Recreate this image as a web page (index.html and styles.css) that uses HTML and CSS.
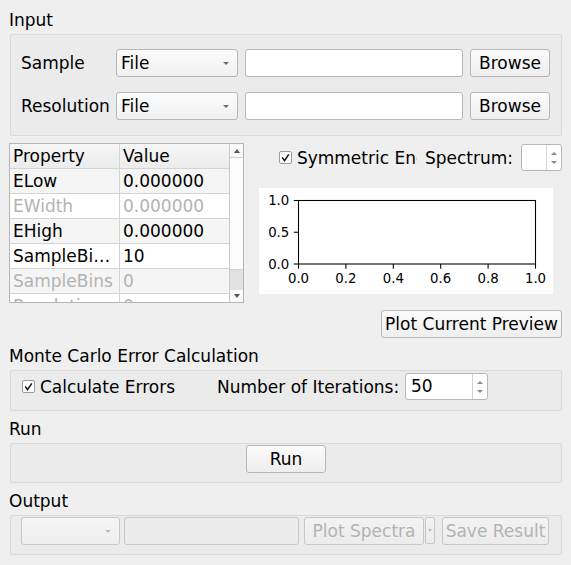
FILE: index.html
```html
<!DOCTYPE html>
<html>
<head>
<meta charset="utf-8">
<link rel="stylesheet" href="styles.css">
</head>
<body>
<div class="page">
  <div class="title">Input</div>
  <div class="group input-group">
    <div class="frow">
      <span class="flabel">Sample</span>
      <div class="combo"><span class="ctext">File</span><i class="tri-down"></i></div>
      <div class="field"></div>
      <div class="btn browse">Browse</div>
    </div>
    <div class="frow">
      <span class="flabel">Resolution</span>
      <div class="combo"><span class="ctext">File</span><i class="tri-down"></i></div>
      <div class="field"></div>
      <div class="btn browse">Browse</div>
    </div>
  </div>

  <div class="middle">
    <div class="table">
      <div class="cells">
        <div class="trow head"><div class="cell c1">Property</div><div class="cell c2">Value</div></div>
        <div class="trow alt"><div class="cell c1">ELow</div><div class="cell c2">0.000000</div></div>
        <div class="trow dis"><div class="cell c1">EWidth</div><div class="cell c2">0.000000</div></div>
        <div class="trow alt"><div class="cell c1">EHigh</div><div class="cell c2">0.000000</div></div>
        <div class="trow"><div class="cell c1">SampleBi…</div><div class="cell c2">10</div></div>
        <div class="trow alt dis"><div class="cell c1">SampleBins</div><div class="cell c2">0</div></div>
        <div class="trow dis"><div class="cell c1">Resolutio</div><div class="cell c2">0</div></div>
      </div>
      <div class="vscroll">
        <div class="sbtn up"><i class="stri-up"></i></div>
        <div class="handle"></div>
        <div class="groove"></div>
        <div class="sbtn down"><i class="stri-down"></i></div>
      </div>
    </div>

    <div class="rightcol">
      <div class="specrow">
        <div class="check sym">
          <svg class="cbox" width="13" height="13" viewBox="0 0 13 13"><rect x="0.5" y="0.5" width="12" height="12" rx="1.5" fill="#fff" stroke="#9c9c9c"/><path d="M3.2 6.4 L5.5 9.6 L9.8 3.3" fill="none" stroke="#111" stroke-width="1.5"/></svg>
          <span class="clip">Symmetric Energy Range</span>
        </div>
        <span class="speclabel">Spectrum:</span>
        <div class="spin spin-small">
          <div class="spinval"></div>
          <div class="spinarrows"><i class="tri-up"></i><i class="tri-down2"></i></div>
        </div>
      </div>
      <div class="plot">
        <svg width="294" height="106" viewBox="0 0 294 106">
          <rect x="0" y="0" width="294" height="106" fill="#fff"/>
          <rect x="39.5" y="12.5" width="237" height="63.5" fill="#fff" stroke="#000" stroke-width="1.07"/>
          <g stroke="#000" stroke-width="1.07">
            <line x1="39.5" y1="76" x2="39.5" y2="80.7"/>
            <line x1="86.9" y1="76" x2="86.9" y2="80.7"/>
            <line x1="134.3" y1="76" x2="134.3" y2="80.7"/>
            <line x1="181.7" y1="76" x2="181.7" y2="80.7"/>
            <line x1="229.1" y1="76" x2="229.1" y2="80.7"/>
            <line x1="276.5" y1="76" x2="276.5" y2="80.7"/>
            <line x1="34.8" y1="12.5" x2="39.5" y2="12.5"/>
            <line x1="34.8" y1="44.25" x2="39.5" y2="44.25"/>
            <line x1="34.8" y1="76" x2="39.5" y2="76"/>
          </g>
          <g class="ticklbl" text-anchor="middle">
            <text x="39.5" y="95">0.0</text>
            <text x="86.9" y="95">0.2</text>
            <text x="134.3" y="95">0.4</text>
            <text x="181.7" y="95">0.6</text>
            <text x="229.1" y="95">0.8</text>
            <text x="276.5" y="95">1.0</text>
          </g>
          <g class="ticklbl" text-anchor="end">
            <text x="30.3" y="17.4">1.0</text>
            <text x="30.3" y="49.1">0.5</text>
            <text x="30.3" y="80.9">0.0</text>
          </g>
        </svg>
      </div>
      <div class="btnrow">
        <div class="btn preview">Plot Current Preview</div>
      </div>
    </div>
  </div>

  <div class="title sec">Monte Carlo Error Calculation</div>
  <div class="group mc-group">
    <div class="check calc">
      <svg class="cbox" width="13" height="13" viewBox="0 0 13 13"><rect x="0.5" y="0.5" width="12" height="12" rx="1.5" fill="#fff" stroke="#9c9c9c"/><path d="M3.2 6.4 L5.5 9.6 L9.8 3.3" fill="none" stroke="#111" stroke-width="1.5"/></svg>
      <span>Calculate Errors</span>
    </div>
    <span class="iterlabel">Number of Iterations:</span>
    <div class="spin spin-iter">
      <div class="spinval">50</div>
      <div class="spinarrows"><i class="tri-up"></i><i class="tri-down2"></i></div>
    </div>
  </div>

  <div class="title sec">Run</div>
  <div class="group run-group">
    <div class="btn run">Run</div>
  </div>

  <div class="title sec">Output</div>
  <div class="group out-group">
    <div class="combo disabled outcombo"><span class="ctext"></span><i class="tri-down"></i></div>
    <div class="field disabled outfield"></div>
    <div class="btn disabled plotspec">Plot Spectra</div>
    <div class="btn disabled menubtn"><i class="tri-down"></i></div>
    <div class="btn disabled save">Save Result</div>
  </div>
</div>
</body>
</html>
```

FILE: styles.css
```css
html, body {
  margin: 0;
  padding: 0;
}
body {
  background: #efefef;
  font-family: "DejaVu Sans", "Noto Sans", sans-serif;
  font-size: 17px;
  color: #000;
}
.page {
  width: 571px;
  height: 565px;
  box-sizing: border-box;
  padding: 10px 9px 0 9px;
  overflow: hidden;
}
.title {
  height: 20px;
  line-height: 20px;
  margin-bottom: 4px;
  white-space: nowrap;
}
.title.sec {
  margin-top: 8px;
}
.group {
  margin-left: 1px;
  background: #ebebeb;
  border: 1px solid #d9d9d9;
  border-radius: 2px;
}

/* Input group */
.input-group {
  padding: 14px 11px 15px 10px;
  display: flex;
  flex-direction: column;
  gap: 15px;
}
.frow {
  display: flex;
  align-items: center;
  height: 28px;
}
.flabel {
  width: 95px;
  flex: none;
  white-space: nowrap;
}
.combo {
  width: 122px;
  height: 28px;
  box-sizing: border-box;
  flex: none;
  border: 1px solid #b7b7b7;
  border-radius: 3px;
  background: linear-gradient(#fcfcfc, #f0f0f0);
  display: flex;
  align-items: center;
  justify-content: space-between;
  padding: 0 8px 0 4px;
}
.ctext {
  line-height: 26px;
}
.tri-down {
  display: block;
  width: 0;
  height: 0;
  border-left: 3.5px solid transparent;
  border-right: 3.5px solid transparent;
  border-top: 3.5px solid #6e6e6e;
}
.field {
  flex: 1;
  height: 28px;
  box-sizing: border-box;
  margin-left: 7px;
  border: 1px solid #b7b7b7;
  border-radius: 3px;
  background: #fff;
}
.btn {
  height: 28px;
  box-sizing: border-box;
  border: 1px solid #b7b7b7;
  border-radius: 3px;
  background: linear-gradient(#fbfbfb, #eeeeee);
  display: flex;
  align-items: center;
  justify-content: center;
  white-space: nowrap;
  flex: none;
}
.browse {
  width: 80px;
  margin-left: 7px;
}

/* Middle */
.middle {
  margin-top: 7px;
  display: flex;
  gap: 6px;
  height: 195px;
}
.table {
  width: 235px;
  height: 160px;
  box-sizing: border-box;
  border: 1px solid #b5b5b5;
  background: #fff;
  display: flex;
  overflow: hidden;
  flex: none;
}
.cells {
  width: 219px;
  overflow: hidden;
}
.trow {
  display: flex;
  height: 25px;
  box-sizing: border-box;
  border-bottom: 1px solid #d4d4d4;
  line-height: 24px;
}
.trow.head {
  background: linear-gradient(#f6f6f6, #ececec);
}
.trow.alt {
  background: #f5f5f5;
}
.trow.dis {
  color: #b3b3b3;
}
.cell {
  box-sizing: border-box;
  padding-left: 3px;
  white-space: nowrap;
  overflow: hidden;
}
.c1 {
  width: 110px;
  border-right: 1px solid #d4d4d4;
}
.c2 {
  width: 109px;
}
.vscroll {
  width: 14px;
  box-sizing: border-box;
  border-left: 1px solid #c9c9c9;
  display: flex;
  flex-direction: column;
}
.sbtn {
  display: flex;
  align-items: center;
  justify-content: center;
  background: #fafafa;
}
.sbtn.up {
  height: 13px;
  border-bottom: 1px solid #d0d0d0;
}
.sbtn.down {
  height: 12px;
}
.handle {
  height: 111px;
  background: #fcfcfc;
  border-bottom: 1px solid #cfcfcf;
}
.groove {
  flex: 1;
  background: #e2e2e2;
}
.stri-up {
  width: 0;
  height: 0;
  border-left: 3.5px solid transparent;
  border-right: 3.5px solid transparent;
  border-bottom: 4px solid #555;
}
.stri-down {
  width: 0;
  height: 0;
  border-left: 3.5px solid transparent;
  border-right: 3.5px solid transparent;
  border-top: 4px solid #555;
}

.rightcol {
  width: 312px;
  flex: none;
  display: flex;
  flex-direction: column;
}
.specrow {
  margin-top: 1px;
  height: 27px;
  display: flex;
  align-items: center;
  justify-content: flex-end;
}
.check {
  display: flex;
  align-items: center;
  white-space: nowrap;
}
.cbox {
  flex: none;
  display: block;
}
.check span {
  margin-left: 5px;
}
.sym {
  width: 138px;
  overflow: hidden;
}
.clip {
  display: block;
  width: 120px;
  flex: none;
  overflow: hidden;
}
.speclabel {
  margin-left: 8px;
  white-space: nowrap;
}
.spin {
  height: 27px;
  box-sizing: border-box;
  border: 1px solid #b7b7b7;
  border-radius: 3px;
  background: #fff;
  display: flex;
  flex: none;
}
.spin-small {
  width: 41px;
  margin-left: 8px;
}
.spinval {
  flex: 1;
  padding-left: 5px;
  line-height: 25px;
}
.spinarrows {
  width: 14px;
  border-left: 1px solid #d3d3d3;
  display: flex;
  flex-direction: column;
  align-items: center;
  justify-content: center;
  gap: 6px;
}
.tri-up {
  width: 0;
  height: 0;
  border-left: 3px solid transparent;
  border-right: 3px solid transparent;
  border-bottom: 3px solid #888;
}
.tri-down2 {
  width: 0;
  height: 0;
  border-left: 3px solid transparent;
  border-right: 3px solid transparent;
  border-top: 3px solid #888;
}
.plot {
  margin: 17px auto 0 auto;
  width: 294px;
  height: 106px;
}
.plot svg {
  display: block;
}
.ticklbl {
  font-family: "DejaVu Sans", sans-serif;
  font-size: 13.3px;
  fill: #000;
}
.btnrow {
  margin-top: 16px;
  display: flex;
  justify-content: flex-end;
}
.preview {
  width: 181px;
}

/* Monte Carlo */
.mc-group {
  height: 41px;
  box-sizing: border-box;
  padding: 2px 10px 10px 11px;
  display: flex;
  align-items: center;
}
.calc {
  width: 195px;
  flex: none;
}
.iterlabel {
  white-space: nowrap;
  width: 188px;
  flex: none;
}
.spin-iter {
  width: 83px;
}

/* Run */
.run-group {
  height: 40px;
  box-sizing: border-box;
  padding: 1px 0 9px 0;
  display: flex;
  justify-content: center;
}
.run {
  width: 80px;
}

/* Output */
.out-group {
  height: 40px;
  box-sizing: border-box;
  padding: 1px 11px 9px 10px;
  display: flex;
  align-items: flex-start;
}
.disabled {
  color: #b3b3b3;
  border-color: #c7c7c7;
}
.btn.disabled {
  background: linear-gradient(#f3f3f3, #ececec);
}
.outcombo {
  width: 99px;
  background: linear-gradient(#f5f5f5, #efefef);
}
.outcombo .tri-down {
  border-top-color: #bdbdbd;
}
.outfield {
  flex: none;
  width: 175px;
  margin-left: 4px;
  background: #ececec;
}
.plotspec {
  width: 120px;
  margin-left: 5px;
}
.menubtn {
  width: 10px;
  height: 27px;
  margin-left: 1px;
  border-radius: 2px;
}
.menubtn .tri-down {
  border-left-width: 2.5px;
  border-right-width: 2.5px;
  border-top: 3px solid #bdbdbd;
}
.save {
  width: 107px;
  margin-left: 7px;
}
```
